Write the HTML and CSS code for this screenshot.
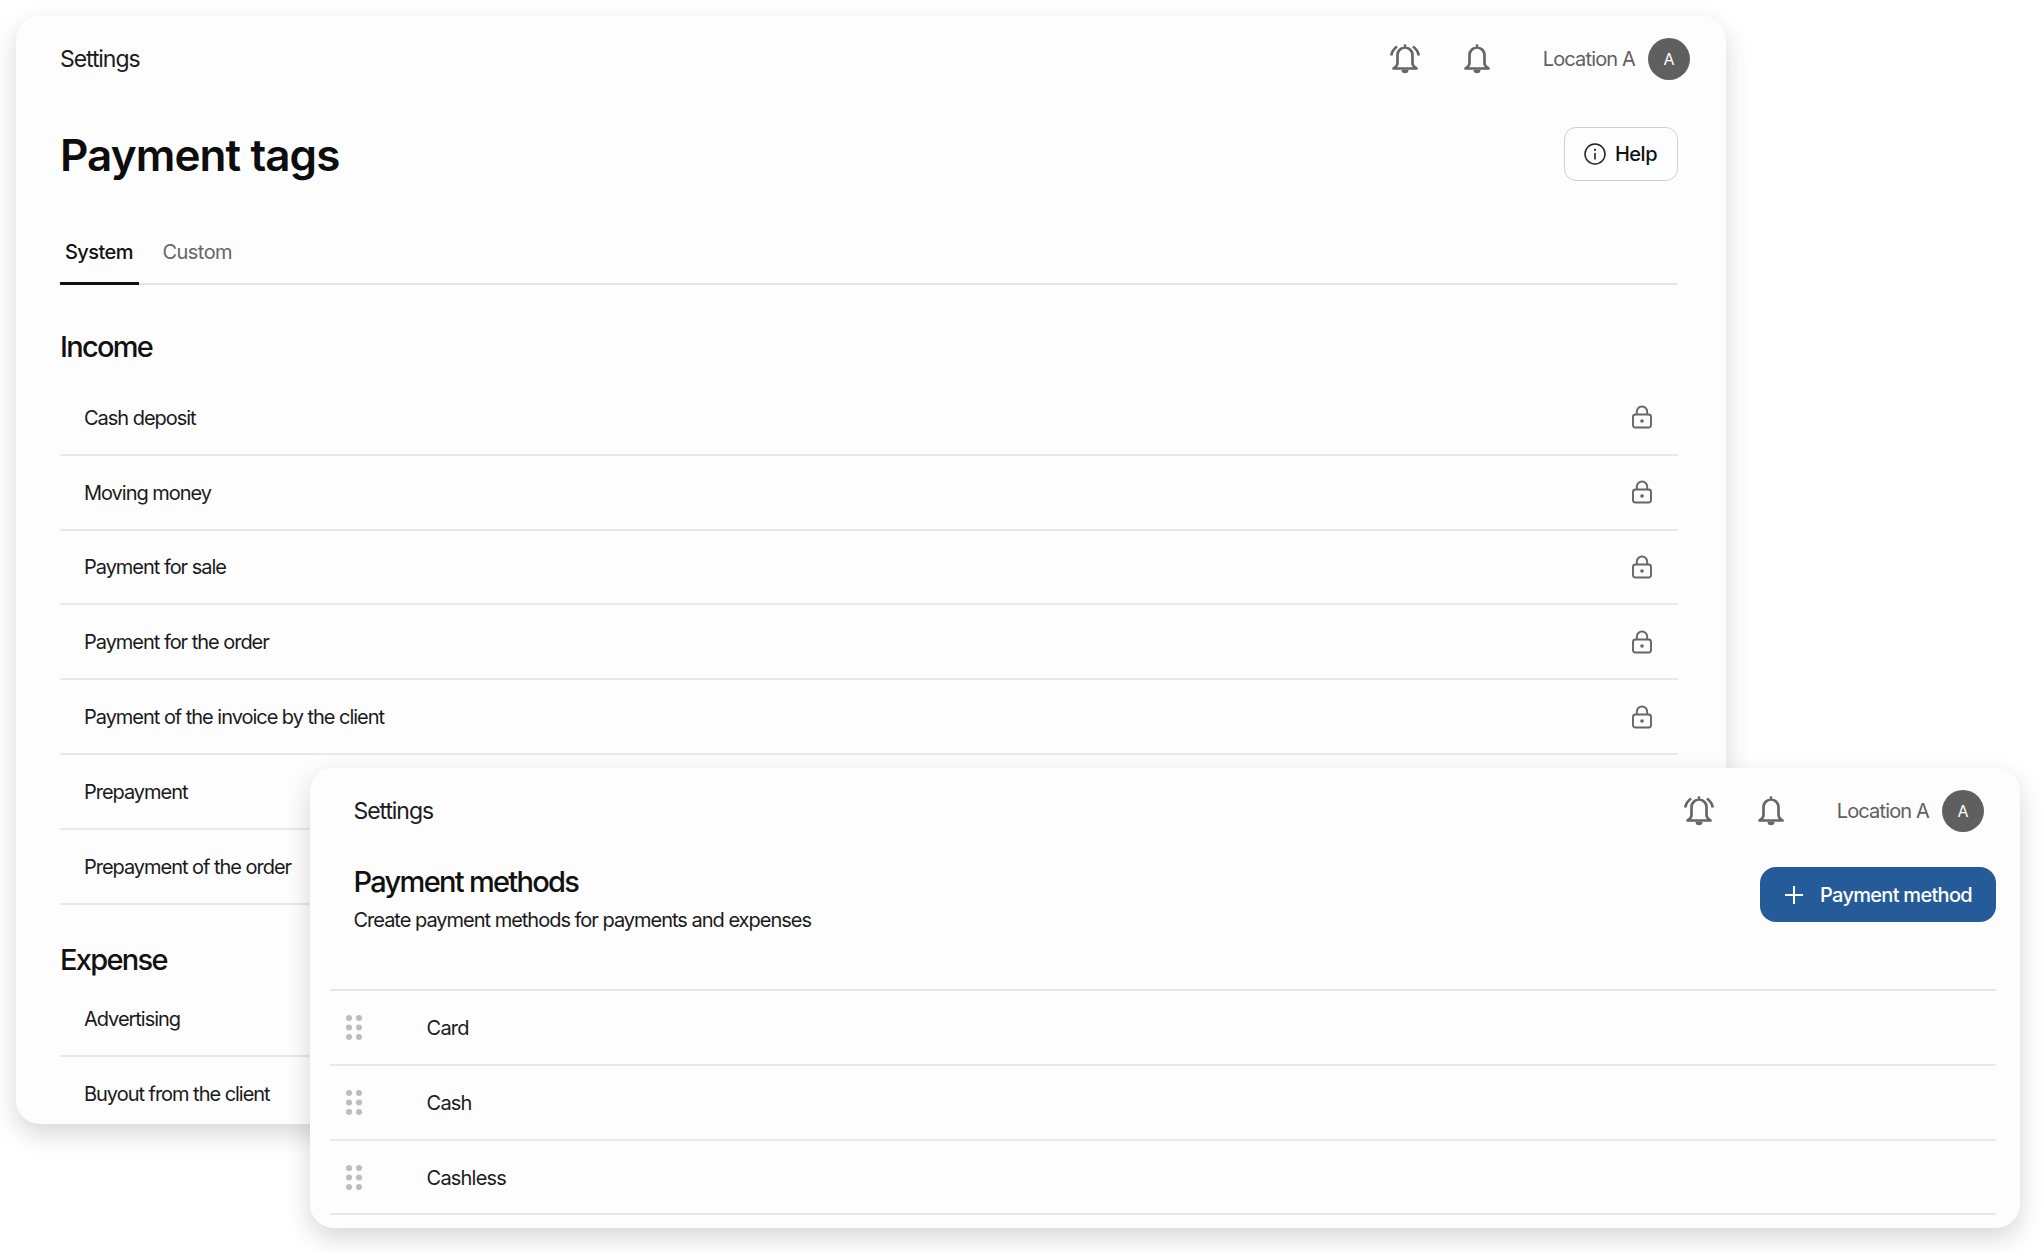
FILE: index.html
```html
<!DOCTYPE html>
<html lang="en">
<head>
<meta charset="utf-8">
<title>Payment tags</title>
<link rel="stylesheet" href="styles.css">
</head>
<body>
<svg class="defs" width="0" height="0" aria-hidden="true">
  <symbol id="bell" viewBox="0 0 30 30"><path d="M15 1.500v2M3.500 24.500c2.600-1.400 4-3 4-6V11a7.500 7.500 0 0 1 15 0v7.500c0 3 1.400 4.600 4 6z" fill="none" stroke="currentColor" stroke-width="2.700" stroke-linejoin="round" stroke-linecap="round"/><path d="M11.500 25.800h7a3.500 3.500 0 0 1-7 0z" fill="currentColor"/></symbol>
  <symbol id="bell-ring" viewBox="0 0 30 30"><path d="M15 1.500v2M3.500 24.500c2.600-1.400 4-3 4-6V11a7.500 7.500 0 0 1 15 0v7.500c0 3 1.400 4.600 4 6z" fill="none" stroke="currentColor" stroke-width="2.700" stroke-linejoin="round" stroke-linecap="round"/><path d="M11.500 25.800h7a3.500 3.500 0 0 1-7 0z" fill="currentColor"/><path d="M1.200 11.500C1.900 8 3.600 5 7 2.500M28.800 11.500C28.100 8 26.400 5 23 2.500" fill="none" stroke="currentColor" stroke-width="2.700"/></symbol>
  <symbol id="lock" viewBox="0 0 24 24"><rect x="3" y="9.500" width="18" height="13" rx="2.500" fill="none" stroke="currentColor" stroke-width="1.900"/><path d="M6.800 9.500V6.700a5.200 5.200 0 0 1 10.400 0v2.800" fill="none" stroke="currentColor" stroke-width="1.900"/><circle cx="12" cy="16" r="1.800" fill="currentColor"/></symbol>
  <symbol id="dots" viewBox="0 0 16 26"><g fill="#bdbdbd"><circle cx="3" cy="3" r="3"/><circle cx="13" cy="3" r="3"/><circle cx="3" cy="12.500" r="3"/><circle cx="13" cy="12.500" r="3"/><circle cx="3" cy="22" r="3"/><circle cx="13" cy="22" r="3"/></g></symbol>
</svg>

<main class="desk">
  <section class="window window-tags">
    <header class="topbar">
      <span class="crumb">Settings</span>
      <div class="tools">
        <svg class="bell"><use href="#bell-ring"/></svg>
        <svg class="bell"><use href="#bell"/></svg>
        <span class="location">Location A</span>
        <span class="avatar">A</span>
      </div>
    </header>
    <div class="tags-body">
      <div class="title-row">
        <h1 class="title">Payment tags</h1>
        <button class="help">
          <svg class="info" viewBox="0 0 24 24"><circle cx="12" cy="12" r="10" fill="none" stroke="currentColor" stroke-width="1.500"/><circle cx="12" cy="7.800" r="1.100" fill="currentColor"/><path d="M12 11v6.500" stroke="currentColor" stroke-width="1.600"/></svg>
          Help
        </button>
      </div>
      <nav class="tabs">
        <span class="tab tab-on">System</span>
        <span class="tab">Custom</span>
      </nav>
      <h2 class="group group-income">Income</h2>
      <ul class="rows">
        <li class="row">Cash deposit<svg class="lock"><use href="#lock"/></svg></li>
        <li class="row">Moving money<svg class="lock"><use href="#lock"/></svg></li>
        <li class="row">Payment for sale<svg class="lock"><use href="#lock"/></svg></li>
        <li class="row">Payment for the order<svg class="lock"><use href="#lock"/></svg></li>
        <li class="row">Payment of the invoice by the client<svg class="lock"><use href="#lock"/></svg></li>
        <li class="row">Prepayment<svg class="lock"><use href="#lock"/></svg></li>
        <li class="row">Prepayment of the order<svg class="lock"><use href="#lock"/></svg></li>
      </ul>
      <h2 class="group group-expense">Expense</h2>
      <ul class="rows">
        <li class="row">Advertising<svg class="lock"><use href="#lock"/></svg></li>
        <li class="row">Buyout from the client<svg class="lock"><use href="#lock"/></svg></li>
      </ul>
    </div>
  </section>

  <section class="window window-methods">
    <header class="topbar">
      <span class="crumb">Settings</span>
      <div class="tools">
        <svg class="bell"><use href="#bell-ring"/></svg>
        <svg class="bell"><use href="#bell"/></svg>
        <span class="location">Location A</span>
        <span class="avatar">A</span>
      </div>
    </header>
    <div class="methods-head">
      <div class="methods-text">
        <h2 class="methods-title">Payment methods</h2>
        <p class="methods-sub">Create payment methods for payments and expenses</p>
      </div>
      <button class="primary">
        <svg class="plus" viewBox="0 0 20 20"><path d="M10 1v18M1 10h18" stroke="currentColor" stroke-width="2"/></svg>
        Payment method
      </button>
    </div>
    <ul class="methods">
      <li class="method"><svg class="dots"><use href="#dots"/></svg>Card</li>
      <li class="method"><svg class="dots"><use href="#dots"/></svg>Cash</li>
      <li class="method"><svg class="dots"><use href="#dots"/></svg>Cashless</li>
    </ul>
  </section>
</main>
</body>
</html>
```
FILE: styles.css
```css
* { box-sizing: border-box; }
html, body { margin: 0; padding: 0; background: #fff; }
body {
  width: 2044px;
  height: 1252px;
  overflow: hidden;
  font-family: Inter, "Liberation Sans", sans-serif;
  color: #1a1a1a;
}
ul { list-style: none; margin: 0; padding: 0; }
h1, h2, p { margin: 0; }
button { font-family: inherit; cursor: pointer; }
.defs { position: absolute; }

.desk { position: relative; width: 2044px; height: 1252px; }

.window {
  position: absolute;
  width: 1710px;
  background: #fdfdfd;
  border-radius: 24px;
  overflow: hidden;
  box-shadow: 0 10px 26px rgba(0, 0, 0, .16);
}
.window-tags { left: 16px; top: 16px; height: 1108px; }
.window-methods { left: 310px; top: 768px; height: 460px; }

.topbar {
  display: flex;
  align-items: center;
  justify-content: space-between;
  height: 86px;
  padding: 0 36px 0 44px;
}
.window-methods .topbar { padding-left: 43.500px; }
.crumb { font-size: 23px; letter-spacing: -1.07px; color: #1c1c1c; }
.tools { display: flex; align-items: center; color: #666; }
.bell { width: 30px; height: 30px; margin-right: 42px; }
.bell + .bell { margin-right: 50.500px; }
.location { font-size: 20px; letter-spacing: -.85px; color: #5f5f5f; margin-right: 13px; }
.avatar {
  display: flex;
  align-items: center;
  justify-content: center;
  width: 42px;
  height: 42px;
  border-radius: 50%;
  background: #5f5f5f;
  color: #fff;
  font-size: 16px;
}

.tags-body { padding: 0 48px 0 44px; }
.title-row { display: flex; align-items: center; justify-content: space-between; height: 106px; }
.title { font-size: 44px; font-weight: 600; letter-spacing: -.9px; color: #0d0d0d; }
.help {
  display: flex;
  align-items: center;
  gap: 8px;
  height: 54px;
  width: 114px;
  margin-bottom: 2px;
  padding: 0 2px 0 0;
  justify-content: center;
  background: transparent;
  border: 1.500px solid #cfcfcf;
  border-radius: 12px;
  font-size: 20px;
  font-weight: 500;
  letter-spacing: -.5px;
  color: #111;
}
.info { width: 24px; height: 24px; color: #222; }

.tabs { display: flex; gap: 23.500px; height: 67px; margin-top: 10px; border-bottom: 2px solid #e6e6e6; }
.tab { display: flex; align-items: center; height: 67px; font-size: 20px; letter-spacing: -.55px; color: #666; }
.tab-on { padding: 3px 6px 0 5px; color: #111; font-weight: 500; border-bottom: 3px solid #111; }

.group { font-size: 29px; font-weight: 500; letter-spacing: -1.7px; color: #111; }
.group-income { margin-top: 44px; line-height: 36px; margin-bottom: 16px; }
.group-expense { margin-top: 37px; line-height: 36px; margin-bottom: 5px; }

.row {
  display: flex;
  align-items: center;
  justify-content: space-between;
  height: 74.800px;
  padding: 1px 24.500px 0 24px;
  border-bottom: 2px solid #e8e8e8;
  font-size: 20px;
  letter-spacing: -1.03px;
}
.lock { width: 24px; height: 24px; margin-top: -1px; color: #666; }

.methods-head { display: flex; justify-content: space-between; height: 135px; padding: 0 24px 0 43.500px; }
.methods-text { padding-top: 10px; }
.methods-title { font-size: 29px; font-weight: 500; letter-spacing: -1.7px; line-height: 36px; color: #111; }
.methods-sub { margin-top: 5.500px; font-size: 20px; letter-spacing: -1.01px; line-height: 28px; }
.primary {
  display: flex;
  align-items: center;
  gap: 16px;
  width: 236px;
  height: 55px;
  margin-top: 13px;
  padding: 0 0 0 24px;
  border: 0;
  border-radius: 16px;
  background: #255b98;
  color: #fff;
  font-size: 20px;
  font-weight: 500;
  letter-spacing: -.7px;
}
.plus { width: 20px; height: 20px; }

.methods { margin: 0 24px 0 20px; border-top: 2px solid #e6e6e6; }
.method {
  display: flex;
  align-items: center;
  height: 74.800px;
  padding: 2px 0 0 16px;
  border-bottom: 2px solid #e8e8e8;
  font-size: 20px;
  letter-spacing: -.8px;
}
.dots { width: 16px; height: 26px; margin-right: 64.600px; }
```
